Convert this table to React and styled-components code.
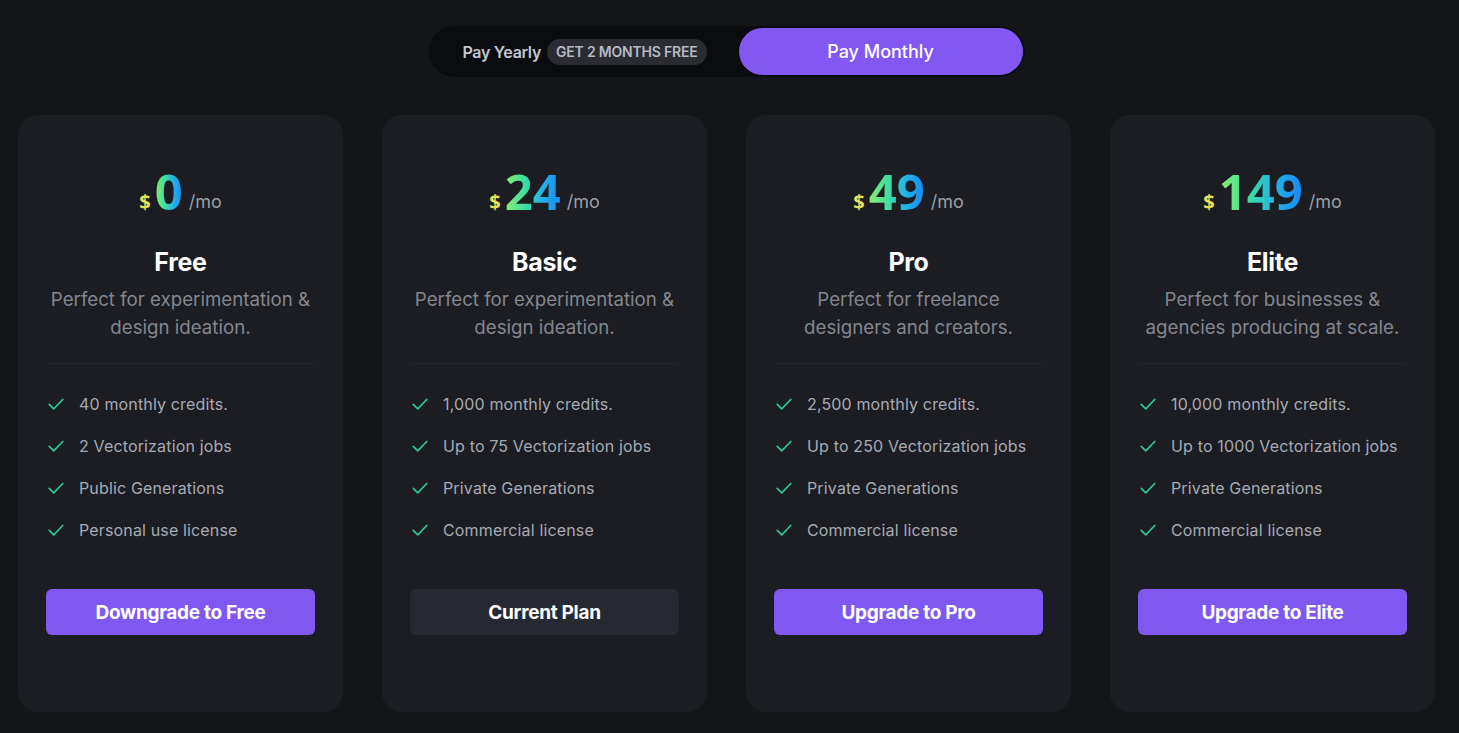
import React from "react";
import styled, { createGlobalStyle } from "styled-components";

const Global = createGlobalStyle`
  html, body { margin: 0; padding: 0; background: #131519; }
  body { font-family: Inter, "Noto Sans", "Liberation Sans", sans-serif; color: #fff; }
  * { box-sizing: border-box; }
`;

const Page = styled.div`
  min-height: 733px;
  padding: 26px 24px 0 18px;
  display: flex;
  flex-direction: column;
  align-items: center;
`;

const Toggle = styled.div`
  display: flex;
  align-items: center;
  width: 596px;
  height: 51px;
  padding: 2px;
  border-radius: 26px;
  background: #0b0c0f;
`;

const ToggleOption = styled.button`
  height: 47px;
  border: none;
  border-radius: 24px;
  cursor: pointer;
  display: flex;
  align-items: center;
  justify-content: center;
  gap: 6px;
  font-family: inherit;
  width: ${(p) => (p.$active ? "284px" : "308px")};
  background: ${(p) => (p.$active ? "#8257f2" : "transparent")};
  color: ${(p) => (p.$active ? "#ffffff" : "#c4c7d0")};
  font-size: ${(p) => (p.$active ? "18px" : "16px")};
  font-weight: ${(p) => (p.$active ? 500 : 600)};
  letter-spacing: ${(p) => (p.$active ? "0" : "-0.3px")};
`;

const Badge = styled.span`
  height: 26px;
  padding: 0 9px;
  border-radius: 13px;
  background: #2a2c32;
  color: #b6b9c2;
  font-size: 14px;
  font-weight: 600;
  display: inline-flex;
  align-items: center;
  letter-spacing: -0.2px;
`;

const Grid = styled.div`
  margin-top: 38px;
  align-self: stretch;
  display: grid;
  grid-template-columns: repeat(4, 325px);
  gap: 39px;
`;

const Card = styled.div`
  height: 597px;
  background: #1b1d22;
  border-radius: 20px;
  padding: 48px 28px 0 28px;
  display: flex;
  flex-direction: column;
  align-items: stretch;
`;

const PriceRow = styled.div`
  display: flex;
  align-items: baseline;
  justify-content: center;
  height: 56px;
`;

const Dollar = styled.span`
  color: #e6e058;
  font-size: 20px;
  font-weight: 700;
  margin-right: 4px;
  font-family: "Noto Sans", Inter, sans-serif;
  position: relative;
  top: -1px;
`;

const Amount = styled.span`
  font-family: "Noto Sans", Inter, sans-serif;
  font-size: 49px;
  line-height: 56px;
  font-weight: 700;
  letter-spacing: 0px;
  background: linear-gradient(90deg, #8ceb6f 0%, #3ddfa0 35%, #22b4e6 65%, #1a87f5 100%);
  -webkit-background-clip: text;
  background-clip: text;
  color: transparent;
`;

const Per = styled.span`
  color: #9a9da6;
  font-size: 18px;
  margin-left: 6px;
  position: relative;
  top: -2px;
`;

const Title = styled.h2`
  margin: 28px 0 0;
  text-align: center;
  font-size: 25px;
  line-height: 30px;
  font-weight: 700;
  color: #ffffff;
  letter-spacing: -0.3px;
`;

const Desc = styled.p`
  margin: 9px 0 0;
  text-align: center;
  font-size: 18.7px;
  line-height: 28px;
  color: #83868f;
  height: 56px;
  white-space: nowrap;
`;

const Divider = styled.hr`
  margin: 21px 0 0;
  border: none;
  height: 1px;
  background: #22252b;
`;

const Features = styled.ul`
  list-style: none;
  margin: 19px 0 0;
  padding: 0;
`;

const Feature = styled.li`
  height: 42px;
  display: flex;
  align-items: center;
  gap: 14px;
  font-size: 16px;
  letter-spacing: 0.15px;
  color: #a7aab3;
  padding-left: 1px;
`;

const Action = styled.button`
  margin-top: 38px;
  height: 46px;
  border: none;
  border-radius: 6px;
  font-family: inherit;
  font-size: 19px;
  font-weight: 700;
  letter-spacing: -0.3px;
  color: #ffffff;
  cursor: pointer;
  background: ${(p) => (p.$current ? "#272932" : "#7f58f1")};
`;

const Check = () => (
  <svg width="18" height="18" viewBox="0 0 24 24" fill="none" stroke="#2fc48d" strokeWidth="2.4" strokeLinecap="round" strokeLinejoin="round">
    <path d="M3 12.5l6 6L21 6" />
  </svg>
);

const plans = [
  {
    price: "0",
    name: "Free",
    desc: ["Perfect for experimentation &", "design ideation."],
    features: ["40 monthly credits.", "2 Vectorization jobs", "Public Generations", "Personal use license"],
    cta: "Downgrade to Free",
  },
  {
    price: "24",
    name: "Basic",
    desc: ["Perfect for experimentation &", "design ideation."],
    features: ["1,000 monthly credits.", "Up to 75 Vectorization jobs", "Private Generations", "Commercial license"],
    cta: "Current Plan",
    current: true,
  },
  {
    price: "49",
    name: "Pro",
    desc: ["Perfect for freelance", "designers and creators."],
    features: ["2,500 monthly credits.", "Up to 250 Vectorization jobs", "Private Generations", "Commercial license"],
    cta: "Upgrade to Pro",
  },
  {
    price: "149",
    name: "Elite",
    desc: ["Perfect for businesses &", "agencies producing at scale."],
    features: ["10,000 monthly credits.", "Up to 1000 Vectorization jobs", "Private Generations", "Commercial license"],
    cta: "Upgrade to Elite",
  },
];

export default function App() {
  return (
    <>
      <Global />
      <Page>
        <Toggle>
          <ToggleOption>
            Pay Yearly <Badge>GET 2 MONTHS FREE</Badge>
          </ToggleOption>
          <ToggleOption $active>Pay Monthly</ToggleOption>
        </Toggle>
        <Grid>
          {plans.map((p) => (
            <Card key={p.name}>
              <PriceRow>
                <Dollar>$</Dollar>
                <Amount>{p.price}</Amount>
                <Per>/mo</Per>
              </PriceRow>
              <Title>{p.name}</Title>
              <Desc>
                {p.desc[0]}
                <br />
                {p.desc[1]}
              </Desc>
              <Divider />
              <Features>
                {p.features.map((f) => (
                  <Feature key={f}>
                    <Check />
                    {f}
                  </Feature>
                ))}
              </Features>
              <Action $current={p.current}>{p.cta}</Action>
            </Card>
          ))}
        </Grid>
      </Page>
    </>
  );
}
